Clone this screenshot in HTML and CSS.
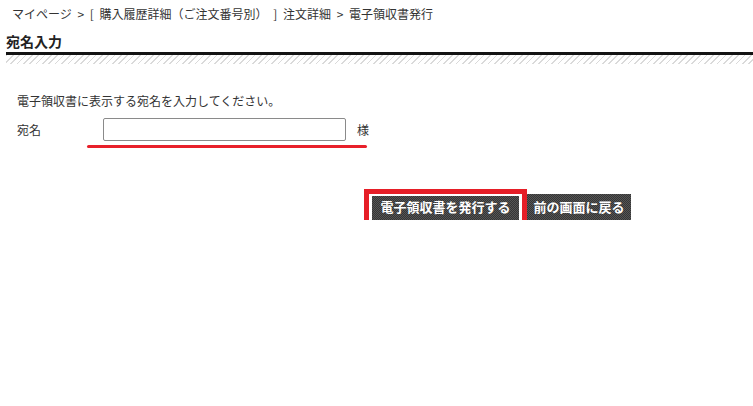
FILE: index.html
```html
<!DOCTYPE html>
<html lang="ja">
<head>
<meta charset="utf-8">
<title>電子領収書発行</title>
<link rel="stylesheet" href="styles.css">
</head>
<body>
<div class="breadcrumb">マイページ &gt; [ 購入履歴詳細（ご注文番号別） ] 注文詳細 &gt; 電子領収書発行</div>
<section class="section">
  <h2 class="heading">宛名入力</h2>
  <div class="hatch"></div>
</section>
<div class="form">
  <p class="intro">電子領収書に表示する宛名を入力してください。</p>
  <div class="row">
    <span class="label">宛名</span>
    <input class="name-input" type="text">
    <span class="suffix">様</span>
    <span class="underline"></span>
  </div>
</div>
<div class="actions">
  <div class="btn-wrap">
    <button class="btn btn-primary" type="button">電子領収書を発行する</button>
    <span class="highlight"></span>
  </div>
  <button class="btn btn-back" type="button">前の画面に戻る</button>
</div>
</body>
</html>
```
FILE: styles.css
```css
html, body {
  margin: 0;
  padding: 0;
  background: #fff;
}
body {
  font-family: "Noto Sans CJK JP", "Noto Sans", sans-serif;
  color: #333;
  font-size: 12px;
}
.breadcrumb {
  padding: 5px 12px 0;
  line-height: 18px;
  font-size: 12px;
  word-spacing: 3px;
  color: #333;
}
.section {
  margin: 8px 0 0 6px;
}
.heading {
  margin: 0;
  font-size: 14px;
  font-weight: bold;
  line-height: 20px;
  color: #222;
  padding-bottom: 1px;
  border-bottom: 3px solid #141414;
}
.hatch {
  height: 9px;
  background: repeating-linear-gradient(135deg, #dadada 0 1.2px, #fff 1.2px 4.5px);
}
.form {
  padding: 28px 0 0 17px;
}
.intro {
  margin: 0;
  line-height: 18px;
}
.row {
  position: relative;
  display: flex;
  align-items: center;
  margin-top: 8px;
  width: 360px;
}
.label {
  width: 86px;
  line-height: 18px;
}
.name-input {
  box-sizing: border-box;
  width: 243px;
  height: 23px;
  margin: 0;
  border: 1px solid #8a8a8a;
  border-radius: 2px;
  background: #fff;
  padding: 2px 4px;
  font: inherit;
}
.suffix {
  margin-left: 11px;
  line-height: 18px;
}
.underline {
  position: absolute;
  left: 70px;
  top: 27px;
  width: 280px;
  height: 3px;
  border-radius: 2px;
  background: #e8202a;
}
.actions {
  display: flex;
  gap: 8px;
  margin-top: 53px;
  padding-left: 372px;
}
.btn-wrap {
  position: relative;
  display: flex;
}
.btn {
  box-sizing: border-box;
  height: 26px;
  margin: 0;
  border: 0;
  color: #fff;
  font-family: "Noto Sans CJK JP", sans-serif;
  font-size: 13px;
  font-weight: bold;
  line-height: 26px;
  background-color: #444;
  background-image: repeating-conic-gradient(#353535 0 25%, #555 0 50%);
  background-size: 2px 2px;
}
.btn-primary {
  width: 147px;
  padding: 0;
}
.btn-back {
  width: 104px;
  padding: 0;
}
.highlight {
  position: absolute;
  left: -8px;
  top: -5px;
  right: -8px;
  bottom: -7px;
  border: 5px solid #e61e27;
  box-shadow: inset 0 0 0 2px #fff;
}
```
